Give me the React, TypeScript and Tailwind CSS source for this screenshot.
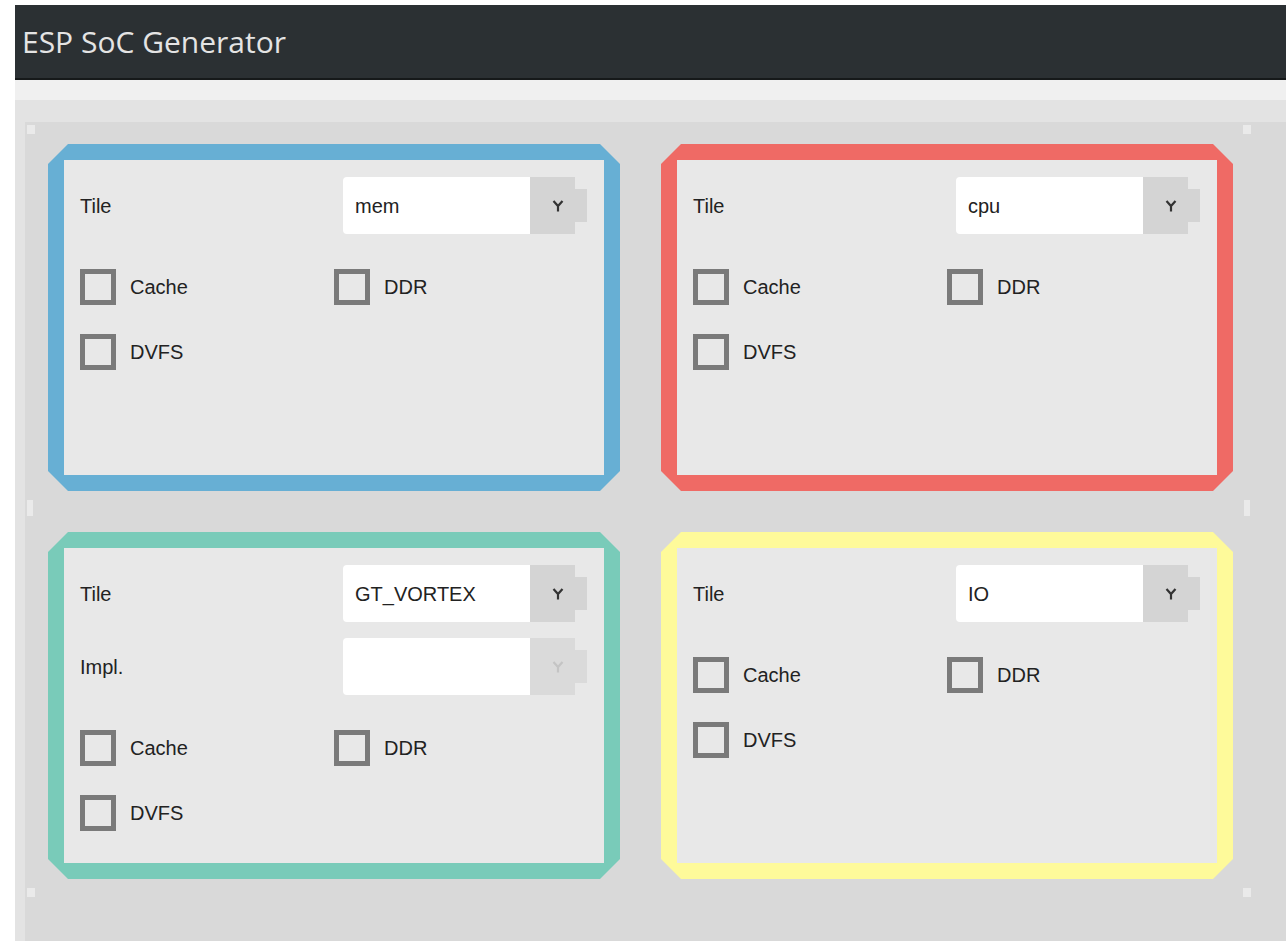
import React from 'react';

type Tile = {
  name: string;
  frame: string;
  impl?: boolean;
};

const tiles: Tile[] = [
  { name: 'mem', frame: 'bg-[#67afd4]' },
  { name: 'cpu', frame: 'bg-[#ef6a65]' },
  { name: 'GT_VORTEX', frame: 'bg-[#79cbb9]', impl: true },
  { name: 'IO', frame: 'bg-[#fefa9a]' },
];

const label = "font-['Liberation_Sans',Arial,sans-serif] text-[20px] leading-none text-[#222]";

// little dropdown arrow, drawn as a "Y"
function Arrow({ muted }: { muted?: boolean }) {
  return (
    <svg width="12" height="12" viewBox="0 0 12 12" fill="none">
      <path
        d="M1.5 1 L6 6 L10.5 1 M6 6 V11.5"
        stroke={muted ? '#c4c4c4' : '#333'}
        strokeWidth="2.2"
      />
    </svg>
  );
}

function Select({ value, disabled }: { value: string; disabled?: boolean }) {
  return (
    <div className="flex h-[57px] w-[244px]">
      <div className="flex w-[187px] items-center rounded-l-[4px] bg-white pl-[12px]">
        <span className={label}>{value}</span>
      </div>
      <div
        className={`flex w-[45px] items-center pl-[22px] ${
          disabled ? 'bg-[#dadada]' : 'bg-[#d4d4d4]'
        }`}
      >
        <Arrow muted={disabled} />
      </div>
      <div
        className={`h-[33px] w-[12px] self-center ${
          disabled ? 'bg-[#dadada]' : 'bg-[#d4d4d4]'
        }`}
      />
    </div>
  );
}

function Check({ text }: { text: string }) {
  return (
    <div className="flex items-center gap-[14px]">
      <div className="h-[36px] w-[36px] border-[5px] border-[#7a7a7a] bg-[#e8e8e8]" />
      <span className={label}>{text}</span>
    </div>
  );
}

function TileCard({ tile }: { tile: Tile }) {
  return (
    <div
      className={`h-[347px] p-[16px] ${tile.frame} [clip-path:polygon(20px_0,calc(100%_-_20px)_0,100%_20px,100%_calc(100%_-_20px),calc(100%_-_20px)_100%,20px_100%,0_calc(100%_-_20px),0_20px)]`}
    >
      <div className="h-full bg-[#e8e8e8] pl-[16px] pr-[17px] pt-[17px]">
        <div className="flex items-center justify-between">
          <span className={label}>Tile</span>
          <Select value={tile.name} />
        </div>
        {tile.impl && (
          <div className="mt-[16px] flex items-center justify-between">
            <span className={label}>Impl.</span>
            <Select value="" disabled />
          </div>
        )}
        <div className="mt-[35px] grid grid-cols-[254px_254px] gap-y-[29px]">
          <Check text="Cache" />
          <Check text="DDR" />
          <Check text="DVFS" />
        </div>
      </div>
    </div>
  );
}

export default function App() {
  return (
    <div className="flex h-[941px] w-full flex-col overflow-hidden bg-white pl-[15px] pt-[5px]">
      <header className="flex h-[75px] shrink-0 items-center border-b-2 border-[#16191a] bg-[#2b3033] pl-[7px]">
        <h1 className="font-['Open_Sans',sans-serif] text-[30px] leading-none text-[#e4e4e4]">
          ESP SoC Generator
        </h1>
      </header>
      <div className="h-[20px] shrink-0 bg-[#f0f0f0]" />
      <div className="flex-1 bg-[#e3e3e3] pl-[10px] pt-[22px]">
        <div className="relative h-full bg-[#d9d9d9] pl-[23px] pt-[22px]">
          {/* resize handles */}
          <span className="absolute left-[2px] top-[3px] h-[9px] w-[8px] bg-[#eaeaea]" />
          <span className="absolute left-[1218px] top-[3px] h-[9px] w-[8px] bg-[#eaeaea]" />
          <span className="absolute left-[2px] top-[378px] h-[16px] w-[6px] bg-[#eaeaea]" />
          <span className="absolute left-[1219px] top-[378px] h-[16px] w-[6px] bg-[#eaeaea]" />
          <span className="absolute left-[2px] top-[766px] h-[9px] w-[8px] bg-[#eaeaea]" />
          <span className="absolute left-[1218px] top-[766px] h-[9px] w-[8px] bg-[#eaeaea]" />
          <div className="grid grid-cols-[572px_572px] gap-x-[41px] gap-y-[41px]">
            {tiles.map((t) => (
              <TileCard key={t.name} tile={t} />
            ))}
          </div>
        </div>
      </div>
    </div>
  );
}
